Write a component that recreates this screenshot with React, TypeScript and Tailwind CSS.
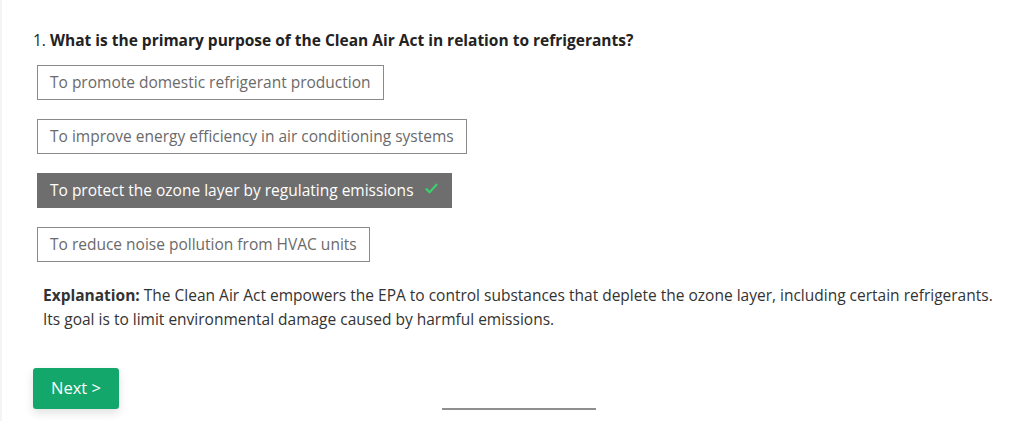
import React from 'react';

const options = [
  'To promote domestic refrigerant production',
  'To improve energy efficiency in air conditioning systems',
  'To protect the ozone layer by regulating emissions',
  'To reduce noise pollution from HVAC units',
];

const correct = 2;

function App() {
  return (
    <div className="min-h-screen bg-white border-l-2 border-gray-100 font-['Open_Sans',sans-serif]">
      <div className="pl-[31px] pt-[30px]">
        <p className="text-[15.5px] leading-[20px] text-[#222]">
          1. <span className="font-bold">What is the primary purpose of the Clean Air Act in relation to refrigerants?</span>
        </p>

        <div className="mt-[15px] ml-[4px] flex flex-col items-start gap-[19px]">
          {options.map((opt, i) =>
            i === correct ? (
              <div
                key={opt}
                className="h-[35px] px-[12px] flex items-center gap-[10px] bg-[#6e6e6e] border border-[#6e6e6e] text-white text-[15.5px]"
              >
                {opt}
                <svg className="mb-[5px]" width="15" height="15" viewBox="0 0 24 24" fill="none" stroke="#3ccf6e" strokeWidth="3.5" strokeLinecap="round" strokeLinejoin="round">
                  <path d="M4 13l5 5L20 6" />
                </svg>
              </div>
            ) : (
              <div
                key={opt}
                className="h-[35px] px-[12px] flex items-center bg-white border border-[#8a8a8a] text-[#6a6a6a] text-[15.5px]"
              >
                {opt}
              </div>
            )
          )}
        </div>

        <p className="mt-[21px] ml-[10px] text-[15.5px] leading-[24px] text-[#333] whitespace-nowrap">
          <span className="font-bold">Explanation:</span> The Clean Air Act empowers the EPA to control substances that deplete the ozone layer, including certain refrigerants.
          <br />
          Its goal is to limit environmental damage caused by harmful emissions.
        </p>

        <div className="mt-[37px] flex items-end">
          <button className="w-[86px] h-[41px] rounded-[3px] bg-[#14a76c] text-white text-[16.5px] shadow-[0_4px_10px_rgba(0,0,0,0.12)]">
            Next &gt;
          </button>
          <div className="ml-[323px] mb-[-1px] w-[154px] h-[2px] bg-[#8f8f8f]" />
        </div>
      </div>
    </div>
  );
}

export default App;
